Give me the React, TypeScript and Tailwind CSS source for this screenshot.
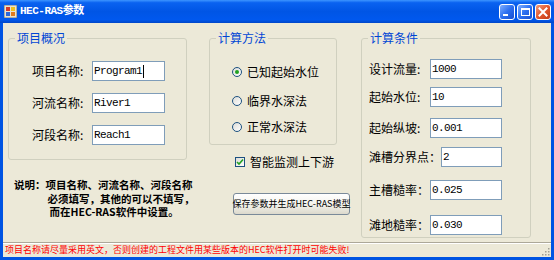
import React from 'react';

const cjk = { fontFamily: '"Noto Sans CJK SC", "Liberation Sans", sans-serif' };
const mono = { fontFamily: '"Liberation Mono", "Noto Sans CJK SC", monospace' };

const GroupBox: React.FC<{ title: string; className: string; children?: React.ReactNode }> = ({ title, className, children }) => (
  <div className={`relative border border-[#D0D0BF] rounded-[3px] ${className}`}>
    <span className="absolute -top-[9px] left-[6px] bg-[#ECE9D8] px-[2px] text-[12px] leading-[16px] text-[#0046D5]" style={cjk}>
      {title}
    </span>
    {children}
  </div>
);

const TextBox: React.FC<{ value: string; className?: string; caret?: boolean }> = ({ value, className = 'w-[73px]', caret }) => (
  <div
    className={`h-[20px] bg-white border border-[#7F9DB9] flex items-center pl-[1px] text-[11px] tracking-[-0.6px] text-black ${className}`}
    style={mono}
  >
    {value}
    {caret && <span className="ml-[1px] inline-block w-[1px] h-[13px] bg-black" />}
  </div>
);

const Radio: React.FC<{ checked?: boolean; label: string }> = ({ checked, label }) => (
  <div className="flex items-center h-[16px]">
    <span className="w-[10px] h-[10px] rounded-full border border-[#1C5180] bg-gradient-to-br from-[#DCDCD7] to-white flex items-center justify-center">
      {checked && <span className="w-[4px] h-[4px] rounded-full bg-[#21A121]" />}
    </span>
    <span className="ml-[5px] text-[12px] text-black" style={cjk}>{label}</span>
  </div>
);

const CondRow: React.FC<{ label: string; value: string; mt: string; w?: string }> = ({ label, value, mt, w = 'w-[72px]' }) => (
  <div className={`flex items-center justify-between pl-[7px] pr-[28px] ${mt}`}>
    <span className="text-[12px] text-black whitespace-nowrap" style={cjk}>{label}</span>
    <TextBox value={value} className={w} />
  </div>
);

const CaptionButton: React.FC<{ kind: 'min' | 'max' | 'close' }> = ({ kind }) => (
  <div
    className={`w-[16px] h-[16px] rounded-[3px] border border-white flex items-center justify-center ${
      kind === 'close'
        ? 'bg-gradient-to-br from-[#F09A7A] via-[#E2572C] to-[#C23A15]'
        : 'bg-gradient-to-br from-[#7FAEFF] via-[#2C6FF0] to-[#1A4FD0]'
    }`}
  >
    {kind === 'min' && <span className="mt-[7px] -ml-[3px] w-[5px] h-[2px] bg-white" />}
    {kind === 'max' && <span className="w-[9px] h-[8px] border border-white border-t-2" />}
    {kind === 'close' && (
      <svg width="10" height="10" viewBox="0 0 10 10">
        <path d="M1.5 1.5 L8.5 8.5 M8.5 1.5 L1.5 8.5" stroke="white" strokeWidth="2" strokeLinecap="square" />
      </svg>
    )}
  </div>
);

export default function App() {
  return (
    <div className="w-[554px] h-[260px] bg-[#0054E3] flex flex-col overflow-hidden">
      {/* title bar */}
      <div className="h-[23px] flex items-center pl-[4px] pr-[3px] bg-[linear-gradient(to_bottom,#3D95FF_0%,#0A62F0_12%,#0055E5_50%,#0058EE_85%,#0046C8_100%)]">
        <svg width="13" height="13" viewBox="0 0 13 13">
          <rect x="0" y="0" width="13" height="13" fill="#E8E4D0" stroke="#7A7A7A" strokeWidth="1" />
          <rect x="2" y="2" width="4" height="4" fill="#D63A2A" />
          <rect x="7" y="2" width="4" height="4" fill="#F2C01E" />
          <rect x="2" y="7" width="4" height="4" fill="#2E68D8" />
          <rect x="7" y="7" width="4" height="4" fill="#E07A1E" />
        </svg>
        <span className="ml-[3px] text-[11px] font-bold tracking-[-0.5px] text-white" style={mono}>
          HEC-RAS参数
        </span>
        <div className="ml-auto flex gap-[2px]">
          <CaptionButton kind="min" />
          <CaptionButton kind="max" />
          <CaptionButton kind="close" />
        </div>
      </div>

      {/* client area */}
      <div className="mx-[3px] h-[234px] bg-[#ECE9D8] flex flex-col">
        <div className="h-[219px] flex">
          {/* left column */}
          <div className="w-[206px] pl-[5px] pt-[15px]">
            <GroupBox title="项目概况" className="w-[179px] h-[122px]">
              <div className="pt-[22px] pl-[23px] flex flex-col gap-[12px]">
                {[
                  ['项目名称:', 'Program1', true],
                  ['河流名称:', 'River1', false],
                  ['河段名称:', 'Reach1', false],
                ].map(([l, v, c]) => (
                  <div key={l as string} className="flex items-center">
                    <span className="w-[60px] text-[12px] text-black" style={cjk}>{l as string}</span>
                    <TextBox value={v as string} caret={c as boolean} />
                  </div>
                ))}
              </div>
            </GroupBox>
            <div className="mt-[18px] ml-[6px] flex text-[10.5px] leading-[13.5px] font-bold text-black whitespace-nowrap" style={cjk}>
              <span>说明：</span>
              <div className="flex flex-col">
                <span>项目名称、河流名称、河段名称</span>
                <span className="pl-[2px]">必须填写，其他的可以不填写，</span>
                <span className="pl-[4px]">而在HEC-RAS软件中设置。</span>
              </div>
            </div>
          </div>

          {/* middle column */}
          <div className="w-[152px] pt-[15px]">
            <GroupBox title="计算方法" className="w-[128px] h-[107px]">
              <div className="pt-[25px] pl-[22px] flex flex-col">
                <Radio checked label="已知起始水位" />
                <div className="mt-[13px]"><Radio label="临界水深法" /></div>
                <div className="mt-[10px]"><Radio label="正常水深法" /></div>
              </div>
            </GroupBox>
            <div className="mt-[10px] ml-[26px] flex items-center h-[14px]">
              <span className="w-[10px] h-[10px] border border-[#1C5180] bg-gradient-to-br from-[#DCDCD7] to-white flex items-center justify-center">
                <svg width="8" height="8" viewBox="0 0 8 8">
                  <path d="M1 4 L3 6 L7 1.5" stroke="#21A121" strokeWidth="1.6" fill="none" />
                </svg>
              </span>
              <span className="ml-[5px] text-[12px] text-black" style={cjk}>智能监测上下游</span>
            </div>
            <button
              className="mt-[24px] ml-[24px] w-[117px] h-[22px] rounded-[3px] border border-[#7A8A99] bg-gradient-to-b from-white via-[#F5F4EE] to-[#DCD9CC] text-[9px] text-black whitespace-nowrap flex items-center justify-center"
              style={cjk}
            >
              保存参数并生成HEC-RAS模型
            </button>
          </div>

          {/* right column */}
          <div className="pt-[15px]">
            <GroupBox title="计算条件" className="w-[170px] h-[200px]">
              <CondRow label="设计流量:" value="1000" mt="mt-[20px]" />
              <CondRow label="起始水位:" value="10" mt="mt-[8px]" />
              <CondRow label="起始纵坡:" value="0.001" mt="mt-[11px]" />
              <CondRow label="滩槽分界点：" value="2" mt="mt-[9px]" w="w-[63px]" />
              <CondRow label="主槽糙率：" value="0.025" mt="mt-[13px]" />
              <CondRow label="滩地糙率：" value="0.030" mt="mt-[15px]" />
            </GroupBox>
          </div>
        </div>

        {/* status bar */}
        <div className="h-[15px] border-t border-[#ACA899] shadow-[inset_0_1px_0_white] flex items-center pl-[2px] relative">
          <span className="text-[9px] leading-[12px] text-[#FF0000] whitespace-nowrap" style={cjk}>
            项目名称请尽量采用英文，否则创建的工程文件用某些版本的HEC软件打开时可能失败!
          </span>
          <svg className="absolute right-[1px] bottom-[1px]" width="10" height="10" viewBox="0 0 10 10">
            {[[8, 2], [8, 5], [5, 5], [8, 8], [5, 8], [2, 8]].map(([x, y]) => (
              <rect key={`${x}-${y}`} x={x} y={y} width="1.5" height="1.5" fill="#A09F94" />
            ))}
          </svg>
        </div>
      </div>
    </div>
  );
}
